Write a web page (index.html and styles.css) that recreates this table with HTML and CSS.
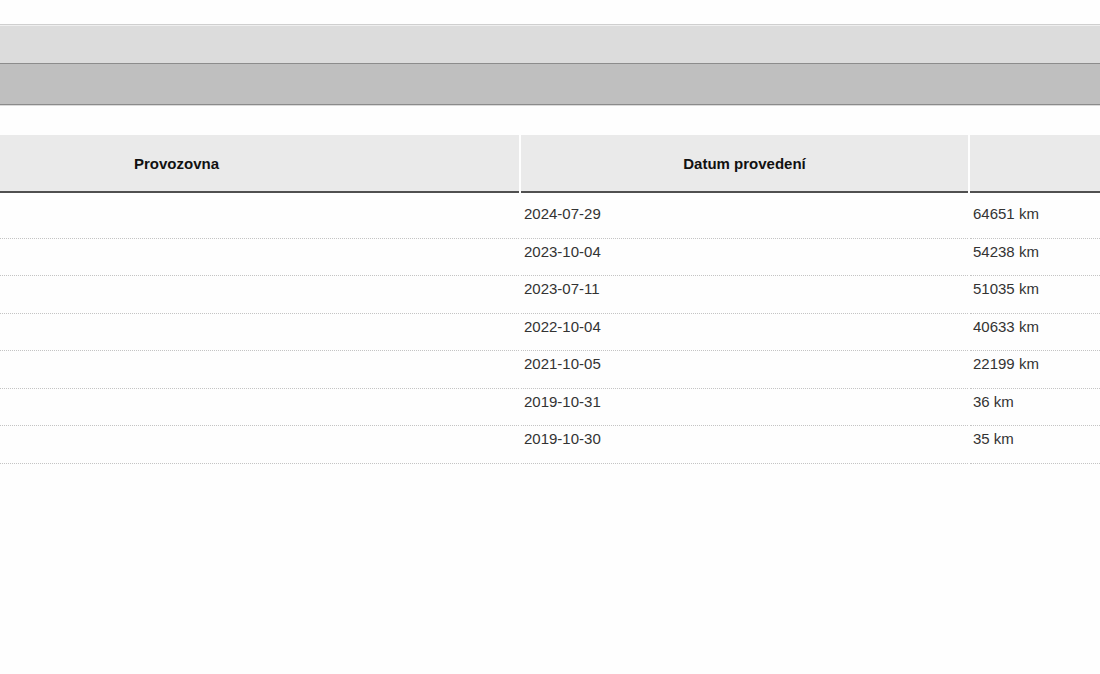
FILE: index.html
```html
<!DOCTYPE html>
<html lang="cs">
<head>
<meta charset="utf-8">
<title>Historie servisu</title>
<link rel="stylesheet" href="styles.css">
</head>
<body>
<div class="page">
  <div class="band band-light"></div>
  <div class="band band-dark"></div>
  <div class="table-wrap">
    <table class="records">
      <thead>
        <tr>
          <th class="col-place">Provozovna</th>
          <th class="col-date">Datum provedení</th>
          <th class="col-km"></th>
        </tr>
      </thead>
      <tbody>
        <tr class="first"><td></td><td>2024-07-29</td><td>64651 km</td></tr>
        <tr><td></td><td>2023-10-04</td><td>54238 km</td></tr>
        <tr><td></td><td>2023-07-11</td><td>51035 km</td></tr>
        <tr><td></td><td>2022-10-04</td><td>40633 km</td></tr>
        <tr><td></td><td>2021-10-05</td><td>22199 km</td></tr>
        <tr><td></td><td>2019-10-31</td><td>36 km</td></tr>
        <tr><td></td><td>2019-10-30</td><td>35 km</td></tr>
      </tbody>
    </table>
  </div>
</div>
</body>
</html>
```
FILE: styles.css
```css
html, body {
  margin: 0;
  padding: 0;
  background: #fefefe;
}

body {
  font-family: "Liberation Sans", Arial, sans-serif;
  font-size: 15px;
  color: #333;
  overflow: hidden;
}

.page {
  padding-top: 24px;
}

.band {
  width: 100%;
}

.band-light {
  height: 38px;
  background: #dcdcdc;
  border-top: 1px solid #cfcfcf;
  box-shadow: inset 0 1px 0 #efefef;
  border-bottom: 1px solid #8c8c8c;
}

.band-dark {
  height: 40px;
  background: #bfbfbf;
  border-bottom: 1px solid #8a8a8a;
  box-shadow: 0 1px 0 #dadada;
}

.table-wrap {
  overflow: hidden;
  padding-top: 30px;
}

.records {
  margin-left: -168px;
  border-collapse: separate;
  border-spacing: 2px 0;
  table-layout: fixed;
  width: 1542px;
}

.records th {
  height: 56px;
  padding: 0;
  background: #eaeaea;
  border-bottom: 2px solid #505050;
  font-weight: bold;
  color: #111;
  text-align: center;
  vertical-align: middle;
}

.col-place { width: 685px; }
.col-date { width: 447px; }
.col-km { width: 402px; }

.records td {
  padding: 4px 3px 15.5px 3px;
  line-height: 17px;
  border-bottom: 1px dotted #c4c4c4;
  vertical-align: top;
  white-space: nowrap;
}

.records tr.first td {
  padding-top: 12px;
}
```
